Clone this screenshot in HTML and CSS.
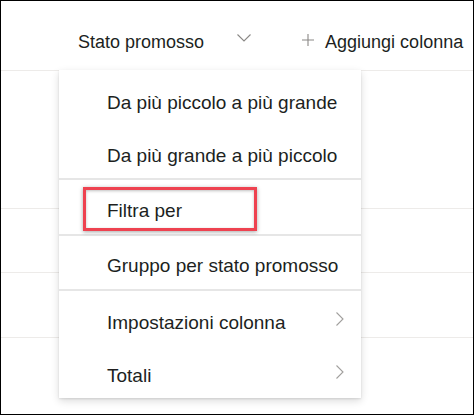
FILE: index.html
```html
<!DOCTYPE html>
<html lang="it">
<head>
	<meta charset="UTF-8">
	<title>Stato promosso</title>
	<link rel="stylesheet" href="styles.css">
</head>
<body>
	<div class="frame">
		<div class="head">
			<span class="col-title">Stato promosso</span>
			<svg class="ico-down" width="14" height="8" viewBox="0 0 14 8"><path d="M0.5 0.5 L7 7 L13.5 0.5" fill="none" stroke="#8a8886" stroke-width="1.1"/></svg>
			<svg class="ico-plus" width="12" height="12" viewBox="0 0 12 12"><path d="M6 0 V12 M0 6 H12" fill="none" stroke="#8a8886" stroke-width="1.1"/></svg>
			<span class="add-col">Aggiungi colonna</span>
		</div>
		<div class="row row-1"></div>
		<div class="row row-2"></div>
		<div class="row row-3"></div>

		<!-- menu contestuale -->
		<div class="menu">
			<div class="sec sec-sort">
				<div class="item item-asc">Da più piccolo a più grande</div>
				<div class="item item-desc">Da più grande a più piccolo</div>
			</div>
			<div class="sec sec-filter">
				<div class="item item-filter">
					Filtra per
					<span class="mark"></span>
				</div>
			</div>
			<div class="sec sec-group">
				<div class="item">Gruppo per stato promosso</div>
			</div>
			<div class="sec sec-more">
				<div class="item item-sub item-set">
					<span>Impostazioni colonna</span>
					<svg class="ico-right" width="8" height="14" viewBox="0 0 8 14"><path d="M0.5 0.5 L7 7 L0.5 13.5" fill="none" stroke="#a19f9d" stroke-width="1.1"/></svg>
				</div>
				<div class="item item-sub item-tot">
					<span>Totali</span>
					<svg class="ico-right" width="8" height="14" viewBox="0 0 8 14"><path d="M0.5 0.5 L7 7 L0.5 13.5" fill="none" stroke="#a19f9d" stroke-width="1.1"/></svg>
				</div>
			</div>
		</div>
	</div>
</body>
</html>
```

FILE: styles.css
```css
*{
	margin:0;
	padding:0;
	box-sizing: border-box;
}
body{
	font-family: "Liberation Sans", Arial, sans-serif;
	color: #201f1e;
	background: #fff;
}
.frame{
	position: relative;
	width: 474px;
	height: 415px;
	border: 1px solid #000;
	overflow: hidden;
}
.head{
	display: flex;
	align-items: flex-start;
	height: 70px;
	padding: 31px 0 0 77px;
	border-bottom: 1px solid #edebe9;
	font-size: 18px;
	line-height: 20px;
}
.ico-down{
	margin: 2px 0 0 33px;
}
.ico-plus{
	margin: 2px 0 0 51px;
}
.add-col{
	margin-left: 11px;
	white-space: nowrap;
}
.row{
	border-bottom: 1px solid #edebe9;
}
.row-1{ height: 138px; }
.row-2{ height: 64px; }
.row-3{ height: 65px; }

.menu{
	position: absolute;
	left: 58px;
	top: 69px;
	width: 302px;
	height: 328px;
	background: #fff;
	box-shadow: 0 3px 8px rgba(0,0,0,.14), 0 1px 2px rgba(0,0,0,.1);
	font-size: 19px;
}
.sec{
	border-bottom: 2px solid #e6e6e6;
}
.sec-sort{
	height: 110px;
	padding-top: 6px;
}
.sec-filter{
	height: 56px;
	padding-top: 4px;
}
.sec-group{
	height: 55px;
}
.sec-more{
	border-bottom: none;
	padding-top: 3px;
}
.item{
	position: relative;
	display: flex;
	align-items: center;
	height: 51px;
	padding: 0 17px 0 48px;
	white-space: nowrap;
}
.item-asc{
	padding-top: 2px;
}
.item-desc{
	padding-top: 6px;
}
.item-filter{
	height: 50px;
	padding-top: 4px;
}
.sec-group .item{
	height: 53px;
	padding-top: 6px;
}
.item-sub{
	justify-content: space-between;
}
.item-set{
	height: 54px;
	padding-top: 4px;
}
.item-tot{
	height: 50px;
	padding-top: 6px;
}
.ico-right{
	margin-bottom: 8px;
}
.mark{
	position: absolute;
	left: 24px;
	top: 3px;
	width: 174px;
	height: 44px;
	border: 3px solid #ee4250;
	box-shadow: 0 1px 4px rgba(0,0,0,.35), inset 0 1px 3px rgba(0,0,0,.25);
}
```
